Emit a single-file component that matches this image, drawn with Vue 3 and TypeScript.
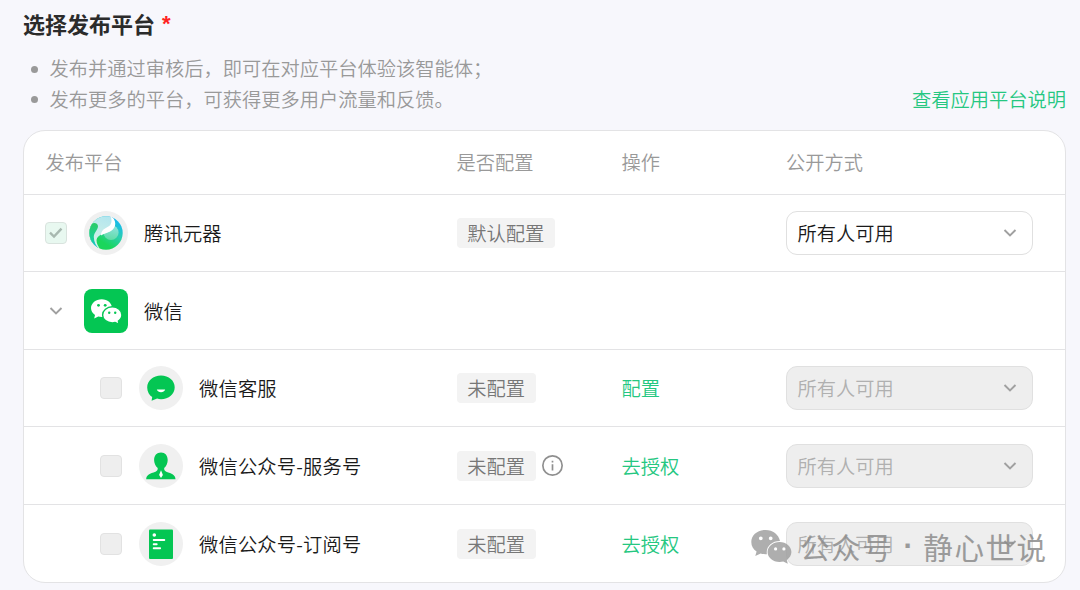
<script setup lang="ts">
type IconName = 'yuanqi' | 'wechat' | 'service' | 'account' | 'subscribe'

interface PlatformRow {
  name: string
  icon: IconName
  child?: boolean
  checked?: boolean
  group?: boolean
  status?: string
  info?: boolean
  action?: string
  enabled?: boolean
}

const tips: string[] = [
  '发布并通过审核后，即可在对应平台体验该智能体；',
  '发布更多的平台，可获得更多用户流量和反馈。',
]

const headers: string[] = ['发布平台', '是否配置', '操作', '公开方式']

const rows: PlatformRow[] = [
  { name: '腾讯元器', icon: 'yuanqi', checked: true, status: '默认配置', enabled: true },
  { name: '微信', icon: 'wechat', group: true },
  { name: '微信客服', icon: 'service', child: true, status: '未配置', action: '配置' },
  { name: '微信公众号-服务号', icon: 'account', child: true, status: '未配置', info: true, action: '去授权' },
  { name: '微信公众号-订阅号', icon: 'subscribe', child: true, status: '未配置', action: '去授权' },
]
</script>

<template>
  <main class="page">
    <h2 class="title">选择发布平台<span class="required">*</span></h2>
    <div class="intro">
      <ul class="tips">
        <li v-for="tip in tips" :key="tip">{{ tip }}</li>
      </ul>
      <a class="link">查看应用平台说明</a>
    </div>

    <section class="table">
      <div class="row head">
        <span v-for="h in headers" :key="h">{{ h }}</span>
      </div>
      <div v-for="row in rows" :key="row.name" class="row">
        <div class="platform" :class="{ child: row.child }">
          <span class="lead">
            <svg v-if="row.group" class="chevron" viewBox="0 0 14 10"><path d="M1.5 2 7 7.5 12.5 2" /></svg>
            <span v-else class="check" :class="{ checked: row.checked }">
              <svg v-if="row.checked" viewBox="0 0 20 20"><path d="M4 9.700 8 13.500 15.500 5.700" /></svg>
            </span>
          </span>

          <span class="icon" :class="{ square: row.icon === 'wechat' }">
            <svg v-if="row.icon === 'yuanqi'" viewBox="0 0 44 44">
              <defs>
                <linearGradient id="yqBase" x1="0.95" y1="0.2" x2="0.4" y2="1">
                  <stop offset="0" stop-color="#16b8f0" />
                  <stop offset="0.4" stop-color="#2bcfae" />
                  <stop offset="0.8" stop-color="#1bd65c" />
                </linearGradient>
                <linearGradient id="yqPale" x1="0.6" y1="0" x2="0.3" y2="1">
                  <stop offset="0" stop-color="#b4e6ee" />
                  <stop offset="1" stop-color="#d9f4e6" />
                </linearGradient>
                <linearGradient id="yqDrop" x1="0" y1="0" x2="0" y2="1">
                  <stop offset="0" stop-color="#2bcc66" />
                  <stop offset="0.6" stop-color="#1bcf9a" />
                  <stop offset="1" stop-color="#12b5f2" />
                </linearGradient>
                <linearGradient id="yqGlow" x1="0.6" y1="0" x2="0.4" y2="1">
                  <stop offset="0" stop-color="#8fe3e2" />
                  <stop offset="1" stop-color="#5fdca4" />
                </linearGradient>
                <clipPath id="yqClip"><circle cx="22" cy="22" r="16.700" /></clipPath>
              </defs>
              <g clip-path="url(#yqClip)">
                <rect x="5" y="5" width="34" height="34" fill="url(#yqBase)" />
                <circle cx="27" cy="21.500" r="7.600" fill="url(#yqGlow)" />
                <path d="M5 5H27C33 11 31.500 17 26 20.500C21.500 22.500 13.500 23 12.500 29Q12.500 34 17 39H5Z" fill="url(#yqPale)" />
                <path d="M26 4C33 9 33 17 26 20.500C22.500 22.200 20 22.500 17 24.500C17 19.500 20.500 17.500 24 15.800C28 13.500 28.500 9 26 4Z" fill="#fff" />
                <path d="M4 18C6 10.500 13.500 10.500 14 15C14 19 10 21 9.800 26C9.800 31 12 35 16 39L9 38L3 27Z" fill="url(#yqDrop)" />
              </g>
            </svg>

            <svg v-else-if="row.icon === 'wechat'" viewBox="0 0 44 44">
              <path fill="#fff" d="M17.700 10.200C11.800 10.200 7 14.200 7 19.100c0 2.900 1.600 5.300 4 6.900l-.8 3.600 4.100-2.200c1.100.3 2.200.5 3.400.5C23.600 27.900 28 24 28 19.100S23.600 10.200 17.700 10.200Z" />
              <path fill="#fff" stroke="#04c653" stroke-width="1.400" d="M28.300 17.800c-5.400 0-9.700 3.600-9.700 8.100s4.300 8 9.700 8c1 0 2-.1 2.900-.4l4 2-.8-3.500c2.200-1.500 3.500-3.700 3.500-6.100 0-4.500-4.200-8.100-9.600-8.100Z" />
              <g fill="#04c653"><circle cx="14.500" cy="16.300" r="1.400" /><circle cx="21.200" cy="16.300" r="1.400" /><circle cx="25.200" cy="23.700" r="1.200" /><circle cx="31.200" cy="23.700" r="1.200" /></g>
            </svg>

            <svg v-else-if="row.icon === 'service'" viewBox="0 0 44 44">
              <path fill="#04c653" d="M22 9.500C14.200 9.500 8.200 14.700 8.200 21.500c0 4.300 2.200 7.700 5 9.600L12.600 34.800l5.500-2.200c1.200.4 2.600.6 3.900.6 7.800 0 13.700-5.200 13.700-11.900S29.800 9.500 22 9.500Z" />
              <path fill="#fff" d="M17.800 23.500h8.400c-.7 1.900-2.200 2.700-4.200 2.700s-3.500-.8-4.200-2.700Z" />
            </svg>

            <svg v-else-if="row.icon === 'account'" viewBox="0 0 44 44">
              <path fill="#04c653" d="M22 8.500c-4.300 0-6.900 3-6.900 7.500 0 3.300 1.400 6.100 3.600 8.100.2 2.100-.5 3-2.200 3.600C11 29.500 7.200 30.800 7.200 35.300h29.300c0-4.500-3.800-5.800-9.200-7.600-1.700-.6-2.300-1.500-2.100-3.600C27.400 22.100 28.700 19.300 28.700 16c0-4.500-2.500-7.500-6.700-7.500Z" />
              <path fill="#fff" d="M22 26.300l-1.900 4.800 1.900 3 1.900-3Z" />
            </svg>

            <svg v-else viewBox="0 0 44 44">
              <rect x="10" y="7.500" width="24" height="29.500" rx="1" fill="#04c653" />
              <g fill="#fff"><circle cx="15.300" cy="13" r="1.800" /><rect x="13.800" y="17" width="12.400" height="2" rx=".8" /><rect x="13.800" y="21.200" width="4.800" height="2" rx=".8" /><rect x="13.800" y="25.300" width="8.200" height="2" rx=".8" /></g>
            </svg>
          </span>
          <span class="name">{{ row.name }}</span>
        </div>

        <div class="status">
          <span v-if="row.status" class="tag">{{ row.status }}</span>
          <svg v-if="row.info" class="info" viewBox="0 0 20 20">
            <circle cx="10" cy="10" r="9.200" />
            <path d="M10 8.800V14.800M10 5.500V7.200" />
          </svg>
        </div>

        <div><a v-if="row.action" class="action">{{ row.action }}</a></div>

        <div v-if="!row.group" class="select" :class="{ disabled: !row.enabled }">
          <span>所有人可用</span>
          <svg class="chevron" viewBox="0 0 14 10"><path d="M1.500 2 7 7.500 12.500 2" /></svg>
        </div>
      </div>
    </section>

    <div class="watermark">
      <svg viewBox="0 0 41 34">
        <path fill="#a0a0a0" fill-rule="evenodd" d="M14.600 0C6.500 0 .3 5.300.3 12c0 4 2 7.400 5.300 9.600L4.300 26l5.300-2.600c1.700.5 3.300.8 5 .8h1.300C14.600 17 20.500 11 28.800 11h.2C27.700 4.600 21.800 0 14.600 0ZM9.800 6.400a1.900 1.900 0 1 1 0 3.800 1.900 1.900 0 0 1 0-3.800Zm9.900 0a1.900 1.900 0 1 1 0 3.800 1.900 1.900 0 0 1 0-3.800Z" />
        <path fill="#a0a0a0" fill-rule="evenodd" d="M28.600 12c-6.800 0-12 4.600-12 10.100s5.200 10 12 10c1.300 0 2.500-.2 3.700-.5l4.500 2.100-1-3.700c2.800-1.900 4.600-4.700 4.600-7.900C40.400 16.600 35.200 12 28.600 12Zm-4 5.300a1.600 1.600 0 1 1 0 3.200 1.600 1.600 0 0 1 0-3.200Zm8.300 0a1.600 1.600 0 1 1 0 3.200 1.600 1.600 0 0 1 0-3.200Z" />
      </svg>
      <span class="wm-name">公众号</span><span class="wm-dot">·</span><span class="wm-name">静心世说</span>
    </div>
  </main>
</template>

<style>
body {
  background: #f7f7fc;
}
</style>

<style scoped>
.page {
  position: relative;
  box-sizing: border-box;
  height: 590px;
  padding: 8px 14px 0 23px;
  overflow: hidden;
  background: #f7f7fc;
  color: #1a1a1a;
  font-family: "Noto Sans CJK SC", sans-serif;
  font-size: 19.250px;
  font-weight: 350;
  line-height: 30px;
}
.title {
  display: flex;
  height: 30px;
  margin: 0;
  color: #2b2b2b;
  font-size: 22px;
  font-weight: 700;
  line-height: 30px;
}
.required {
  margin: 1px 0 0 7px;
  color: #f22;
  font-family: "Liberation Sans", sans-serif;
  font-weight: 700;
}
.intro {
  display: flex;
  align-items: flex-end;
  justify-content: space-between;
  height: 60px;
  margin: 16px 0 15.500px;
}
.tips {
  margin: 0;
  padding: 0;
  color: #999;
  list-style: none;
}
.tips li {
  display: flex;
  align-items: center;
  height: 30.500px;
}
.tips li::before {
  width: 7px;
  height: 7px;
  margin: 2px 12px 0 7.500px;
  border-radius: 50%;
  background: #999;
  content: "";
}
.link,
.action {
  color: #25c781;
}
.table {
  box-sizing: border-box;
  width: 1043px;
  height: 453px;
  border: 1px solid #e3e3e5;
  border-radius: 22px;
  background: #fff;
}
.row {
  display: grid;
  grid-template-columns: 411px 165px 164.500px 246.500px;
  align-items: center;
  box-sizing: border-box;
  height: 77.600px;
  padding-left: 21.500px;
  border-bottom: 1px solid #e3e3e5;
}
.row:last-child {
  border-bottom: 0;
}
.head {
  height: 64.200px;
  color: #999;
}
.platform {
  display: flex;
  align-items: center;
}
.child {
  padding-left: 55px;
}
.lead {
  display: flex;
  justify-content: center;
  width: 22px;
  margin: 0 17px 0 -0.500px;
}
.check {
  box-sizing: border-box;
  width: 22px;
  height: 22px;
  border: 1px solid #e2e2e2;
  border-radius: 4px;
  background: #eee;
}
.check.checked {
  border-color: #d9e3de;
  background: #e8f8f0;
}
.check svg {
  display: block;
  fill: none;
  stroke: #a8b8b0;
  stroke-width: 2.400;
}
.chevron {
  width: 14px;
  height: 10px;
  fill: none;
  stroke: #a0a0a0;
  stroke-width: 1.900;
}
.icon {
  width: 44px;
  height: 44px;
  margin-right: 16px;
  border-radius: 50%;
  background: #f0f0f0;
}
.icon.square {
  border-radius: 8px;
  background: #04c653;
}
.icon svg {
  display: block;
}
.name {
  letter-spacing: 0.200px;
}
.status {
  display: flex;
  align-items: center;
}
.tag {
  padding: 0 10.700px;
  border-radius: 4px;
  background: #f3f3f3;
  color: #777;
}
.info {
  width: 21px;
  height: 21px;
  margin-left: 6.500px;
  fill: none;
  stroke: #8f8f8f;
  stroke-width: 1.600;
}
.select {
  display: flex;
  align-items: center;
  justify-content: space-between;
  box-sizing: border-box;
  height: 44px;
  padding: 0 15px 0 10.500px;
  border: 1px solid #e0e0e0;
  border-radius: 11px;
  background: #fff;
}
.disabled {
  background: #eee;
  color: #b0b0b0;
}
.watermark {
  position: absolute;
  top: 525px;
  left: 751px;
  display: flex;
  align-items: center;
  color: #8c8c8c;
  font-size: 29.500px;
  font-weight: 400;
  line-height: 42px;
  opacity: 0.85;
}
.watermark svg {
  width: 41px;
  height: 34px;
  margin: 2px 8px 0 0;
}
.wm-name {
  margin-top: -1px;
  letter-spacing: 1.600px;
}
.wm-dot {
  width: 30px;
  font-family: "Liberation Sans", sans-serif;
  font-weight: 700;
  text-align: center;
}
</style>
